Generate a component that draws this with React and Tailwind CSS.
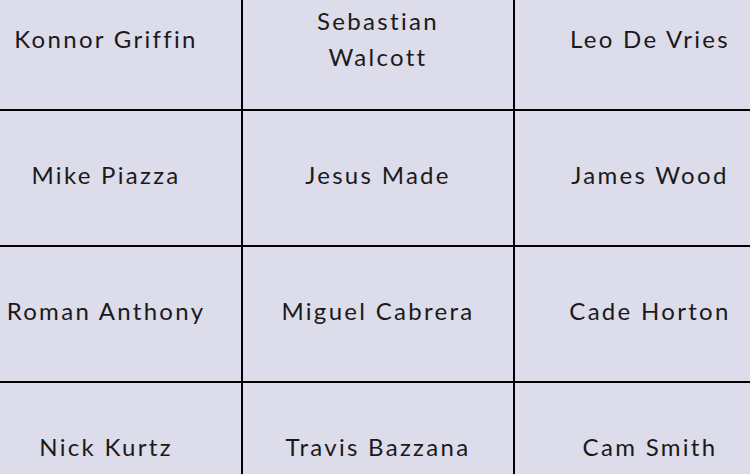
import React from 'react'

const names = [
    'Konnor Griffin', 'Sebastian Walcott', 'Leo De Vries',
    'Mike Piazza', 'Jesus Made', 'James Wood',
    'Roman Anthony', 'Miguel Cabrera', 'Cade Horton',
    'Nick Kurtz', 'Travis Bazzana', 'Cam Smith',
]

const App = () => {
    return (
        <div className="w-[750px] h-[474px] overflow-hidden bg-[#dddcea]" style={{ fontFamily: 'Lato, "Open Sans", sans-serif' }}>
            <div className="-ml-[29px] -mt-[25px] w-[814px] grid grid-cols-[270px_270px_270px] grid-rows-[134px_134px_134px_134px] gap-[2px] bg-black">
                {names.map((name) => (
                    <div key={name} className="bg-[#dddcea] flex items-center justify-center text-center pb-[6px]">
                        <span className="max-w-[225px] text-[24px] leading-[36px] tracking-[2.3px] text-[#1a1a1a]">
                            {name}
                        </span>
                    </div>
                ))}
            </div>
        </div>
    )
}

export default App
